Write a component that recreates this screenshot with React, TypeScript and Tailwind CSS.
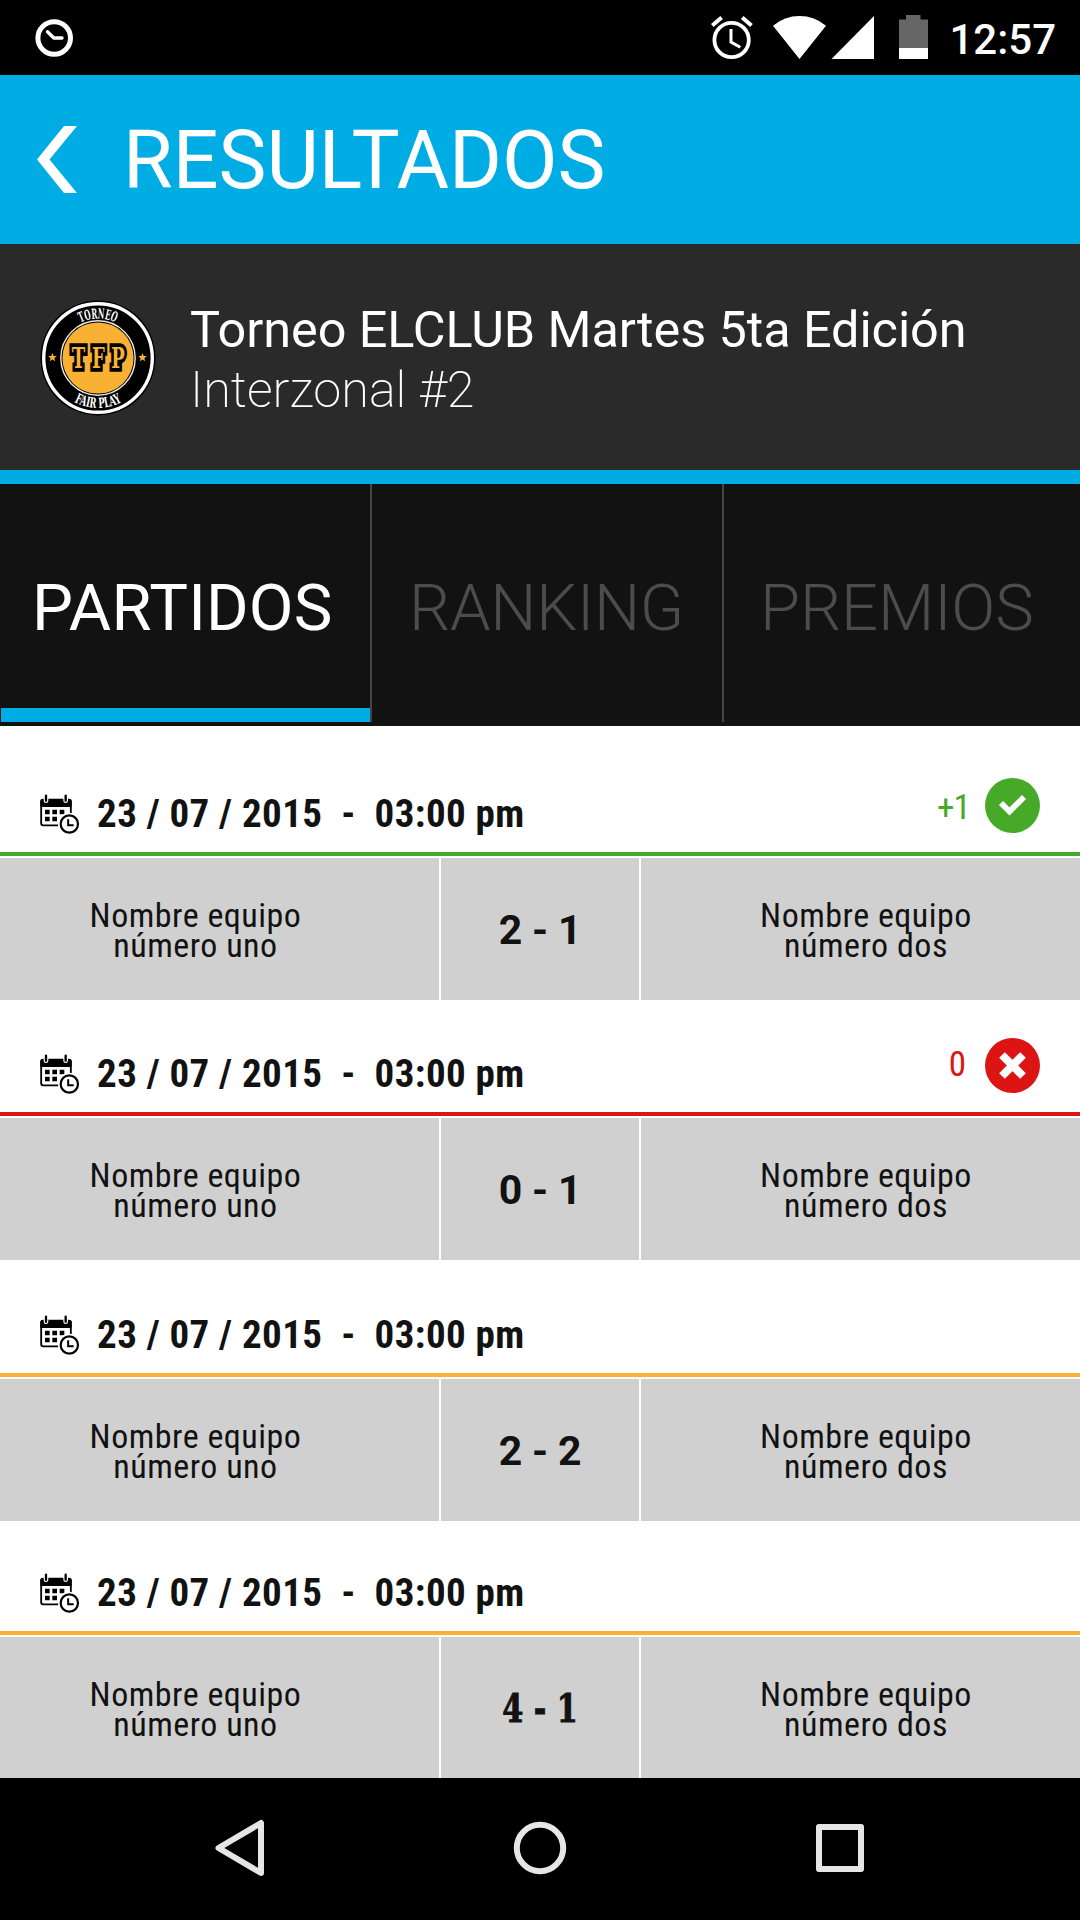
type Status = "won" | "lost" | "neutral";

interface Match {
  header: string;
  status: Status;
  points?: string;
  score: string;
  slab?: boolean;
}

const matches: Match[] = [
  { header: "h-[130px]", status: "won", points: "+1", score: "2 - 1" },
  { header: "h-[116px]", status: "lost", points: "0", score: "0 - 1" },
  { header: "h-[117px]", status: "neutral", score: "2 - 2" },
  { header: "h-[114px]", status: "neutral", score: "4 - 1", slab: true },
];

const borderColor: Record<Status, string> = {
  won: "border-[#46aa28]",
  lost: "border-[#dc1414]",
  neutral: "border-[#f8b133]",
};

function StatusBar() {
  return (
    <div className="flex h-[75px] shrink-0 items-start bg-black pr-[24px] pl-[35px]">
      <svg className="mt-[18px] h-[40px] w-[40px]" viewBox="35 18 40 40" fill="none" stroke="#fff">
        <circle cx="54.2" cy="38" r="16.3" strokeWidth="5" />
        <path d="M47.5 31.8L53.8 38H62" strokeWidth="3.4" strokeLinecap="round" strokeLinejoin="round" />
      </svg>
      <svg className="mt-[14px] ml-auto h-[47px] w-[44px]" viewBox="710 14 44 47" fill="none" stroke="#fff">
        <circle cx="731.6" cy="40" r="17.2" strokeWidth="3.8" />
        <path d="M731 29V42L740.3 47.2" strokeWidth="3" />
        <path d="M712.3 25.6L721.6 17.6M742.2 17.6L751.5 25.6" strokeWidth="4" />
      </svg>
      <svg className="mt-[14px] ml-[18px] h-[46px] w-[56px]" viewBox="772 14 56 46" fill="#fff">
        <path d="M799.5 59L773 25.7Q784.5 16 799.5 16T826 25.7Z" />
      </svg>
      <svg className="mt-[14px] ml-[3px] h-[46px] w-[44px]" viewBox="831 14 44 46" fill="#fff">
        <path d="M831.5 59H874V16Z" />
      </svg>
      <svg className="mt-[14px] ml-[23px] h-[46px] w-[32px]" viewBox="898 14 32 46">
        <path d="M899 48V19.5H906V15H920.5V19.5H928V48Z" fill="#666" />
        <path d="M899 48H928V59H899Z" fill="#fff" />
      </svg>
      <span className="ml-[19px] pt-[2px] text-[42px] leading-[75px] font-medium text-white">12:57</span>
    </div>
  );
}

function TournamentLogo() {
  return (
    <svg className="mt-[56px] h-[116px] w-[116px] shrink-0" viewBox="-58 -58 116 116">
      <defs>
        <path id="arc-top" d="M-39.5 0A39.5 39.5 0 0 1 39.5 0" />
        <path id="arc-bottom" d="M-50 0A50 50 0 0 0 50 0" />
      </defs>
      <circle r="57.5" fill="#000" />
      <circle r="54.3" fill="none" stroke="#fff" strokeWidth="3.4" />
      <circle r="37.2" fill="none" stroke="#e8e8e8" strokeWidth="1.4" />
      <circle r="35.6" fill="#f8b133" />
      <g fill="#fff" fontFamily="DejaVu Serif" fontWeight="700" fontSize="14" textAnchor="middle">
        <text textLength="36" lengthAdjust="spacingAndGlyphs">
          <textPath href="#arc-top" startOffset="50%" textLength="36" lengthAdjust="spacingAndGlyphs">TORNEO</textPath>
        </text>
        <text textLength="50" lengthAdjust="spacingAndGlyphs">
          <textPath href="#arc-bottom" startOffset="50%" textLength="50" lengthAdjust="spacingAndGlyphs">FAIR PLAY</textPath>
        </text>
      </g>
      <text
        x="-24.500 0.5 25"
        y="8.500"
        transform="scale(0.8 1.15)"
        fontFamily="DejaVu Serif"
        fontWeight="700"
        fontSize="25"
        textAnchor="middle"
        className="[font-stretch:75%]"
        fill="#f8b133"
        stroke="#000"
        strokeWidth="6.500"
        paintOrder="stroke"
      >
        TFP
      </text>
      <path
        id="star"
        d="M-45.5 -5L-44.3 -2.1L-41.2 -1.9L-43.6 .2L-42.8 3.3L-45.5 1.6L-48.2 3.3L-47.4 .2L-49.8 -1.9L-46.7 -2.1Z"
        fill="#f8b133"
      />
      <use href="#star" x="90" />
    </svg>
  );
}

function CalendarClock() {
  return (
    <svg className="mb-[18px] h-[40px] w-[40px] shrink-0" viewBox="30 43 120 120">
      <rect x="33.5" y="60" width="89" height="77" rx="6" fill="#fff" stroke="#000" strokeWidth="5.5" />
      <path d="M31 82V65Q31 58 38 58H118Q125 58 125 65V82Z" fill="#000" />
      <g strokeLinecap="round">
        <path d="M48 46V63M107 46V63" stroke="#fff" strokeWidth="14" />
        <path d="M48 48V63M107 48V63" stroke="#000" strokeWidth="7" />
      </g>
      <path d="M45 90h14v14h-14zM67 90h14v14h-14zM89 90h14v14h-14zM45 111h14v14h-14zM67 111h14v14h-14z" fill="#000" />
      <circle cx="118" cy="133" r="34" fill="#fff" />
      <circle cx="118" cy="133" r="26" fill="#fff" stroke="#000" strokeWidth="6.5" />
      <path d="M114.500 119V137H131" fill="none" stroke="#000" strokeWidth="6" />
    </svg>
  );
}

function ResultBadge({ status, points }: { status: Status; points: string }) {
  const won = status === "won";
  return (
    <div className="ml-auto flex items-end">
      <span
        className={
          won
            ? "mb-[24px] -mr-[1px] font-['Roboto_Condensed'] text-[35px] leading-[40px] tracking-[-0.8px] text-[#46aa28]"
            : "mb-[27px] mr-[3px] font-['Roboto_Condensed'] text-[35px] leading-[40px] text-[#dc1414]"
        }
      >
        {points}
      </span>
      <svg className="mr-[40px] mb-[19px] ml-[16px] h-[55px] w-[55px]" viewBox="0 0 55 55" fill="none" stroke="#fff">
        <circle cx="27.5" cy="27.5" r="27.5" stroke="none" fill={won ? "#46aa28" : "#dc1414"} />
        {won ? (
          <path d="M16 25L24.500 33.500L39 19" strokeWidth="5.800" />
        ) : (
          <path d="M17 17L38 38M38 17L17 38" strokeWidth="8" />
        )}
      </svg>
    </div>
  );
}

function Team({ second, className }: { second: string; className: string }) {
  return (
    <div className={className}>
      Nombre equipo
      <br />
      {second}
    </div>
  );
}

function MatchRow({ match, last }: { match: Match; last: boolean }) {
  return (
    <section className="shrink-0">
      <div className={`flex items-end border-b-4 pl-[40px] ${match.header} ${borderColor[match.status]}`}>
        <CalendarClock />
        <span className="mb-[18px] ml-[17px] font-['Roboto_Condensed'] text-[39px] leading-[40px] font-bold tracking-[0.42px] whitespace-pre">
          {"23 / 07 / 2015  -  03:00 pm"}
        </span>
        {match.points && <ResultBadge status={match.status} points={match.points} />}
      </div>
      <div
        className={`mt-[2px] grid grid-cols-[439px_198px_439px] gap-x-[2px] text-center font-['Roboto_Condensed'] text-[34px] leading-[30px] tracking-[0.5px] ${last ? "h-[141px]" : "h-[142px]"}`}
      >
        <Team second="número uno" className="bg-[#d0d0d0] pt-[42px] pr-[48px]" />
        <div className="flex h-full items-start justify-center overflow-hidden bg-[#d0d0d0]">
          {match.slab ? (
            <span className="scale-x-[0.84] font-['DejaVu_Serif'] text-[40px] leading-[142px] font-bold tracking-normal [-webkit-text-stroke:0.9px_#121212] [font-stretch:75%]">
              {match.score}
            </span>
          ) : (
            <span className="font-[Roboto] text-[41px] leading-[144px] font-bold tracking-[-0.2px]">
              {match.score}
            </span>
          )}
        </div>
        <Team second="número dos" className="bg-[#d0d0d0] pt-[42px] pl-[11px]" />
      </div>
    </section>
  );
}

export default function App() {
  return (
    <div className="flex h-[1920px] w-[1080px] flex-col overflow-hidden bg-white font-[Roboto,sans-serif] text-[#121212]">
      <StatusBar />

      <header className="flex h-[169px] shrink-0 items-center bg-[#00ace4] pl-[37px]">
        <svg className="h-[67px] w-[40px]" viewBox="37 126 40 67" fill="#fff">
          <path d="M64 126H77L49.500 159.500L77 193H64L37 159.500Z" />
        </svg>
        <h1 className="ml-[46px] pt-[2px] text-[80.7px] leading-[167px] text-white">RESULTADOS</h1>
      </header>

      <div className="flex h-[240px] shrink-0 items-start border-b-14 border-[#00ace4] bg-[#2a2a2a] pl-[40px] text-white">
        <TournamentLogo />
        <div className="ml-[34px] pt-[56px]">
          <div className="text-[50.4px] leading-[60px] tracking-[-0.07px]">Torneo ELCLUB Martes 5ta Edición</div>
          <div className="text-[50.4px] leading-[60px] font-[170]">Interzonal #2</div>
        </div>
      </div>

      <nav className="flex h-[242px] shrink-0 bg-[#121212] pb-[4px] text-[65px] font-light text-[#4c4c4c]">
        <div className="ml-[1px] flex w-[369px] items-center border-b-14 border-[#00ace4] pt-[26px] pl-[31px] font-normal tracking-[0.2px] text-white">
          PARTIDOS
        </div>
        <div className="flex w-[352px] items-center border-l-2 border-[#444] pt-[12px] pl-[37px] tracking-[-0.3px]">RANKING</div>
        <div className="flex w-[358px] items-center border-l-2 border-[#444] pt-[12px] pl-[36px] tracking-[-0.1px]">PREMIOS</div>
      </nav>

      <main className="flex flex-col">
        {matches.map((m, i) => (
          <MatchRow key={i} match={m} last={i === matches.length - 1} />
        ))}
      </main>

      <footer className="flex h-[142px] shrink-0 items-start justify-center bg-black">
        <svg className="mt-[40px] h-[60px] w-[654px]" viewBox="213 1818 654 60" fill="none" stroke="#e6e6e6" strokeWidth="6" strokeLinejoin="round">
          <path d="M218.500 1848L261 1823V1873Z" />
          <circle cx="540" cy="1848" r="23.200" />
          <rect x="819" y="1827" width="42" height="42" />
        </svg>
      </footer>
    </div>
  );
}
